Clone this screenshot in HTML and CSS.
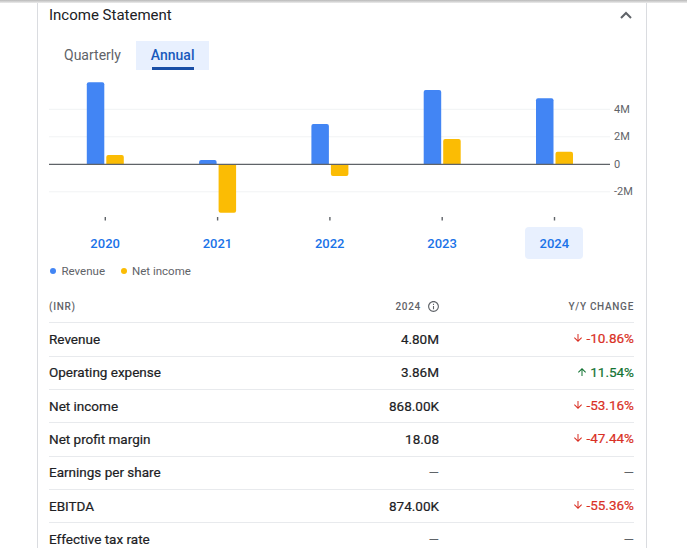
FILE: index.html
```html
<!DOCTYPE html>
<html lang="en">
<head>
<meta charset="utf-8">
<title>Income Statement</title>
<link rel="stylesheet" href="styles.css">
</head>
<body>
<div class="topbar"></div>
<section class="card">
  <header class="card-head">
    <h2 class="card-title">Income Statement</h2>
    <svg class="chev" width="12" height="8" viewBox="0 0 12 8" aria-hidden="true"><polyline points="1,7 6,2 11,7" fill="none" stroke="#5f6368" stroke-width="2"/></svg>
  </header>
  <div class="tabs">
    <button class="tab">Quarterly</button>
    <button class="tab active">Annual</button>
  </div>
  <svg class="chart" width="585" height="157" viewBox="0 0 585 157" aria-label="Revenue and net income chart">
    <g stroke="#f1f3f4" stroke-width="1">
      <line x1="0" y1="39.3" x2="561" y2="39.3"/>
      <line x1="0" y1="66.8" x2="561" y2="66.8"/>
      <line x1="0" y1="121.8" x2="561" y2="121.8"/>
    </g>
    <g fill="#4285f4">
      <path d="M37.8 94.3V14.3Q37.8 12.3 39.8 12.3H53.3Q55.3 12.3 55.3 14.3V94.3Z"/>
      <path d="M150.1 94.3V92Q150.1 90 152.1 90H165.6Q167.6 90 167.6 92V94.3Z"/>
      <path d="M262.4 94.3V56Q262.4 54 264.4 54H277.9Q279.9 54 279.9 56V94.3Z"/>
      <path d="M374.7 94.3V22Q374.7 20 376.7 20H390.2Q392.2 20 392.2 22V94.3Z"/>
      <path d="M487 94.3V30.3Q487 28.3 489 28.3H502.5Q504.5 28.3 504.5 30.3V94.3Z"/>
    </g>
    <g fill="#fbbc04">
      <path d="M57.3 94.3V87Q57.3 85 59.3 85H72.8Q74.8 85 74.8 87V94.3Z"/>
      <path d="M169.6 94.3V140.7Q169.6 142.7 171.6 142.7H185.1Q187.1 142.7 187.1 140.7V94.3Z"/>
      <path d="M281.9 94.3V104Q281.9 106 283.9 106H297.4Q299.4 106 299.4 104V94.3Z"/>
      <path d="M394.2 94.3V71Q394.2 69 396.2 69H409.7Q411.7 69 411.7 71V94.3Z"/>
      <path d="M506.5 94.3V83.7Q506.5 81.7 508.5 81.7H522Q524 81.7 524 83.7V94.3Z"/>
    </g>
    <line x1="0" y1="94.3" x2="561" y2="94.3" stroke="#5f6368" stroke-width="1.2"/>
    <g stroke="#5f6368" stroke-width="1.4">
      <line x1="56.3" y1="147" x2="56.3" y2="150.5"/>
      <line x1="168.6" y1="147" x2="168.6" y2="150.5"/>
      <line x1="280.9" y1="147" x2="280.9" y2="150.5"/>
      <line x1="393.2" y1="147" x2="393.2" y2="150.5"/>
      <line x1="505.5" y1="147" x2="505.5" y2="150.5"/>
    </g>
    <g class="axis-label" fill="#5f6368">
      <text x="565" y="39.3">4M</text>
      <text x="565" y="66.8">2M</text>
      <text x="565" y="94.3">0</text>
      <text x="565" y="121.8">-2M</text>
    </g>
  </svg>
  <div class="years">
    <button class="year">2020</button>
    <button class="year">2021</button>
    <button class="year">2022</button>
    <button class="year">2023</button>
    <button class="year selected">2024</button>
  </div>
  <div class="legend">
    <span class="dot dot-rev"></span><span class="legend-text">Revenue</span>
    <span class="dot dot-net"></span><span class="legend-text">Net income</span>
  </div>
  <table class="fin">
    <thead>
      <tr>
        <th class="c-label">(INR)</th>
        <th class="c-val"><span class="hdr-year">2024<svg class="info" width="13" height="13" viewBox="0 0 24 24" aria-hidden="true"><path fill="#5f6368" d="M11 7h2v2h-2zm0 4h2v6h-2zm1-9C6.48 2 2 6.480 2 12s4.48 10 10 10 10-4.48 10-10S17.52 2 12 2zm0 18c-4.41 0-8-3.590-8-8s3.59-8 8-8 8 3.59 8 8-3.59 8-8 8z"/></svg></span></th>
        <th class="c-chg">Y/Y change</th>
      </tr>
    </thead>
    <tbody>
      <tr>
        <td class="c-label">Revenue</td>
        <td class="c-val">4.80M</td>
        <td class="c-chg"><span class="chg down"><svg width="12" height="12" viewBox="0 0 24 24"><path d="M20 12l-1.41-1.41L13 16.17V4h-2v12.17l-5.58-5.59L4 12l8 8 8-8z"/></svg>-10.86%</span></td>
      </tr>
      <tr>
        <td class="c-label">Operating expense</td>
        <td class="c-val">3.86M</td>
        <td class="c-chg"><span class="chg up"><svg width="12" height="12" viewBox="0 0 24 24"><path d="M4 12l1.41 1.41L11 7.83V20h2V7.83l5.58 5.59L20 12l-8-8-8 8z"/></svg>11.54%</span></td>
      </tr>
      <tr>
        <td class="c-label">Net income</td>
        <td class="c-val">868.00K</td>
        <td class="c-chg"><span class="chg down"><svg width="12" height="12" viewBox="0 0 24 24"><path d="M20 12l-1.41-1.41L13 16.17V4h-2v12.17l-5.58-5.59L4 12l8 8 8-8z"/></svg>-53.16%</span></td>
      </tr>
      <tr>
        <td class="c-label">Net profit margin</td>
        <td class="c-val">18.08</td>
        <td class="c-chg"><span class="chg down"><svg width="12" height="12" viewBox="0 0 24 24"><path d="M20 12l-1.41-1.41L13 16.17V4h-2v12.17l-5.58-5.59L4 12l8 8 8-8z"/></svg>-47.44%</span></td>
      </tr>
      <tr>
        <td class="c-label">Earnings per share</td>
        <td class="c-val dash">—</td>
        <td class="c-chg dash">—</td>
      </tr>
      <tr>
        <td class="c-label">EBITDA</td>
        <td class="c-val">874.00K</td>
        <td class="c-chg"><span class="chg down"><svg width="12" height="12" viewBox="0 0 24 24"><path d="M20 12l-1.41-1.41L13 16.17V4h-2v12.17l-5.58-5.59L4 12l8 8 8-8z"/></svg>-55.36%</span></td>
      </tr>
      <tr>
        <td class="c-label">Effective tax rate</td>
        <td class="c-val dash">—</td>
        <td class="c-chg dash">—</td>
      </tr>
    </tbody>
  </table>
</section>
</body>
</html>
```
FILE: styles.css
```css
* { box-sizing: border-box; }
html, body { margin: 0; background: #fff; }
body {
  font-family: Roboto, "Liberation Sans", Arial, sans-serif;
  color: #202124;
}
.topbar {
  height: 3px;
  background: linear-gradient(#b9b9b9, #ececec);
}
.card {
  margin-left: 37px;
  width: 610px;
  border-left: 1px solid #dadce0;
  border-right: 1px solid #dadce0;
  padding: 0 12px 0 11px;
}
.card-head {
  display: flex;
  justify-content: space-between;
  align-items: center;
  height: 24px;
}
.card-title {
  margin: 0;
  font-size: 15px;
  font-weight: 400;
  color: #202124;
}
.chev { display: block; margin-right: 2px; }

.tabs { display: flex; margin-top: 14px; }
.tab {
  position: relative;
  height: 29px;
  padding: 0 15px 1px;
  border: 0;
  background: none;
  font-family: inherit;
  font-size: 14px;
  color: #5f6368;
}
.tab.active {
  background: #e8f0fe;
  color: #185abc;
  font-weight: 500;
}
.tab.active::after {
  content: "";
  position: absolute;
  left: 16px;
  right: 15px;
  bottom: 0;
  height: 3px;
  background: #1a4fa6;
}

.chart { display: block; }
.axis-label text {
  font-family: Roboto, "Liberation Sans", Arial, sans-serif;
  font-size: 11px;
  dominant-baseline: central;
}

.years {
  display: grid;
  grid-template-columns: repeat(5, 112.3px);
  height: 32px;
}
.year {
  justify-self: center;
  width: 58px;
  height: 32px;
  border: 0;
  border-radius: 4px;
  background: none;
  font-family: inherit;
  font-size: 13px;
  font-weight: 500;
  color: #1a73e8;
  padding: 0;
}
.year.selected { background: #e8f0fe; }

.legend {
  display: flex;
  align-items: center;
  height: 14px;
  margin-top: 5px;
  font-size: 11.5px;
  color: #5f6368;
}
.dot {
  width: 6px;
  height: 6px;
  border-radius: 50%;
  margin-left: 0.5px;
  margin-right: 6px;
}
.dot-rev { background: #4285f4; }
.dot-net { background: #fbbc04; margin-left: 16px; margin-right: 5px; }

.fin {
  width: 585px;
  margin-top: 12px;
  border-collapse: separate;
  border-spacing: 0;
  table-layout: fixed;
}
.fin tr { height: 33.33px; }
.fin th, .fin td {
  padding: 0;
  border-bottom: 1px solid #e8eaed;
  vertical-align: middle;
}
.fin td { padding-bottom: 1px; }
.fin th {
  font-size: 10px;
  font-weight: 500;
  letter-spacing: 0.7px;
  text-transform: uppercase;
  color: #5f6368;
}
.c-label { text-align: left; width: 280px; }
.c-val { text-align: right; width: 110px; }
.c-chg { text-align: right; width: 195px; }
.fin td {
  font-size: 13.5px;
  font-weight: 400;
  color: #202124;
  -webkit-text-stroke: 0.2px #202124;
}
.hdr-year { display: inline-flex; align-items: center; }
.info { margin-left: 6px; margin-right: -1px; }
.chg { display: inline-flex; align-items: center; }
.chg svg { margin-right: 2px; }
.fin td .chg.down { color: #d93025; -webkit-text-stroke-color: #d93025; }
.chg.down svg { fill: #d93025; }
.fin td .chg.up { color: #137333; -webkit-text-stroke-color: #137333; }
.chg.up svg { fill: #137333; }
.fin td.dash { color: #5f6368; -webkit-text-stroke: 0; }
```
